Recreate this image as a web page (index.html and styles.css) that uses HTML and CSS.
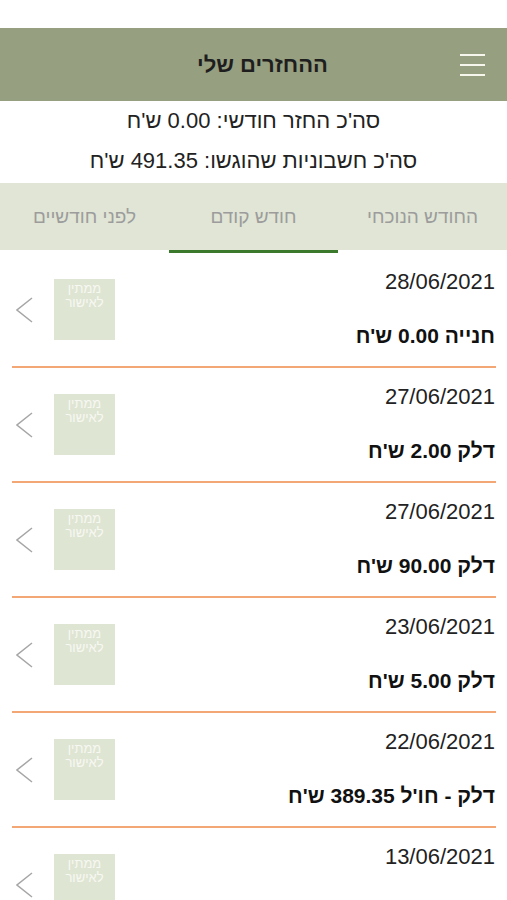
FILE: index.html
```html
<!DOCTYPE html>
<html lang="he" dir="rtl">
<head>
    <meta charset="UTF-8">
    <meta name="viewport" content="width=device-width, initial-scale=1.0">
    <title>ההחזרים שלי</title>
    <link rel="stylesheet" href="styles.css">
</head>
<body>
    <div class="status-bar"></div>
    <header class="top-bar">
        <div class="menu-btn">
            <span></span>
            <span></span>
            <span></span>
        </div>
        <h1>ההחזרים שלי</h1>
    </header>

    <div class="summary">
        <p>סה'כ החזר חודשי: 0.00 ש'ח</p>
        <p>סה'כ חשבוניות שהוגשו: 491.35 ש'ח</p>
    </div>

    <nav class="tabs">
        <div class="tab">החודש הנוכחי</div>
        <div class="tab active">חודש קודם</div>
        <div class="tab">לפני חודשיים</div>
    </nav>

    <ul class="refund-list">
        <li class="refund-item">
            <div class="info">
                <div class="date">28/06/2021</div>
                <div class="title">חנייה 0.00 ש'ח</div>
            </div>
            <div class="status">ממתין<br>לאישור</div>
            <svg class="chevron" viewBox="0 0 17 26"><polyline points="16,1 1,13 16,25" /></svg>
        </li>
        <li class="refund-item">
            <div class="info">
                <div class="date">27/06/2021</div>
                <div class="title">דלק 2.00 ש'ח</div>
            </div>
            <div class="status">ממתין<br>לאישור</div>
            <svg class="chevron" viewBox="0 0 17 26"><polyline points="16,1 1,13 16,25" /></svg>
        </li>
        <li class="refund-item">
            <div class="info">
                <div class="date">27/06/2021</div>
                <div class="title">דלק 90.00 ש'ח</div>
            </div>
            <div class="status">ממתין<br>לאישור</div>
            <svg class="chevron" viewBox="0 0 17 26"><polyline points="16,1 1,13 16,25" /></svg>
        </li>
        <li class="refund-item">
            <div class="info">
                <div class="date">23/06/2021</div>
                <div class="title">דלק 5.00 ש'ח</div>
            </div>
            <div class="status">ממתין<br>לאישור</div>
            <svg class="chevron" viewBox="0 0 17 26"><polyline points="16,1 1,13 16,25" /></svg>
        </li>
        <li class="refund-item">
            <div class="info">
                <div class="date">22/06/2021</div>
                <div class="title">דלק - חו'ל 389.35 ש'ח</div>
            </div>
            <div class="status">ממתין<br>לאישור</div>
            <svg class="chevron" viewBox="0 0 17 26"><polyline points="16,1 1,13 16,25" /></svg>
        </li>
        <li class="refund-item">
            <div class="info">
                <div class="date">13/06/2021</div>
            </div>
            <div class="status">ממתין<br>לאישור</div>
            <svg class="chevron" viewBox="0 0 17 26"><polyline points="16,1 1,13 16,25" /></svg>
        </li>
    </ul>
</body>
</html>
```

FILE: styles.css
```css
* {
    margin: 0;
    padding: 0;
    box-sizing: border-box;
}
body {
    font-family: "Liberation Sans", Arial, sans-serif;
    background-color: #fff;
    color: #222;
}
.status-bar {
    height: 28px;
    background: #fff;
}
.top-bar {
    display: flex;
    align-items: center;
    height: 73px;
    padding: 0 22px 0 65px;
    background-color: #969f80;
}
.top-bar h1 {
    flex: 1;
    text-align: center;
    font-size: 22px;
    font-weight: bold;
    color: #1e1e1e;
}
.menu-btn {
    display: flex;
    flex-direction: column;
    gap: 8px;
    width: 25px;
}
.menu-btn span {
    display: block;
    height: 2px;
    background: #f6f6ec;
}
.summary {
    text-align: center;
    font-size: 22px;
    line-height: 40px;
    color: #222;
    padding-bottom: 2px;
}
.tabs {
    display: grid;
    grid-template-columns: repeat(3, 1fr);
    background-color: #e0e5d5;
}
.tab {
    height: 70px;
    display: flex;
    align-items: center;
    justify-content: center;
    font-size: 19px;
    color: #9c9c9c;
    border-bottom: 3px solid #fff;
}
.tab.active {
    border-bottom-color: #3b7a2c;
}
.refund-list {
    list-style: none;
}
.refund-item {
    display: flex;
    align-items: center;
    height: 115px;
    margin: 0 11px 0 12px;
    padding-left: 4px;
    border-bottom: 2px solid #f2a774;
}
.refund-item .info {
    flex: 1;
    display: flex;
    flex-direction: column;
    justify-content: space-between;
    align-self: stretch;
    padding: 16px 1px 17px 0;
}
.refund-item .date {
    font-size: 22px;
    line-height: 26px;
    color: #222;
}
.refund-item .title {
    font-size: 21px;
    line-height: 26px;
    font-weight: bold;
    color: #111;
}
.status {
    width: 61px;
    height: 61px;
    background-color: #dfe5d3;
    color: #f7f8f2;
    font-size: 13px;
    line-height: 14px;
    text-align: center;
    padding-top: 3px;
}
.chevron {
    width: 17px;
    height: 26px;
    margin-right: 21px;
    fill: none;
    stroke: #a6a6a6;
    stroke-width: 1.5;
}
```
